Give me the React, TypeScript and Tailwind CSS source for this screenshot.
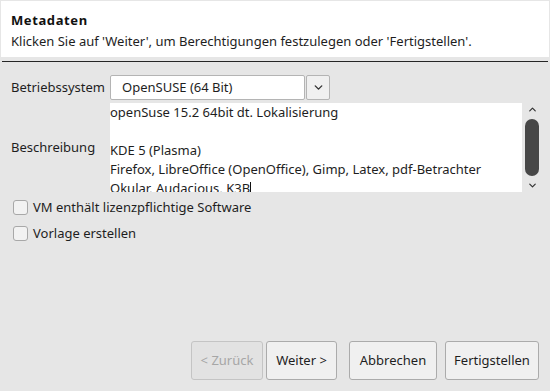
import { ChevronDown, ChevronUp } from 'lucide-react'

const font = { fontFamily: '"Noto Sans", "Open Sans", sans-serif' }

function Checkbox({ label }: { label: string }) {
  return (
    <label className="flex items-center gap-[5px] h-[15px]">
      <span className="w-[15px] h-[15px] rounded-[3px] border border-[#a8a8a8] bg-[#f2f2f2] shrink-0" />
      <span className="text-[13px] text-[#1e1e1e] leading-none">{label}</span>
    </label>
  )
}

function Button({ children, disabled, className = '' }: { children: React.ReactNode; disabled?: boolean; className?: string }) {
  return (
    <button
      disabled={disabled}
      className={`h-[39px] rounded-[3px] border text-[13px] ${
        disabled ? 'bg-[#e2e2e2] border-[#c4c4c4] text-[#a6a6a6]' : 'bg-[#f0f0f0] border-[#ababab] text-[#1e1e1e]'
      } ${className}`}
    >
      {children}
    </button>
  )
}

export default function App() {
  return (
    <div style={font} className="w-[550px] h-[391px] bg-[#e6e6e6] flex flex-col overflow-hidden">
      {/* Kopfbereich */}
      <div className="mx-[1px] mt-[1px] h-[56px] bg-white px-[10px] pt-[10px]">
        <div className="text-[13px] font-bold tracking-[0.6px] text-[#111] leading-[18px]">Metadaten</div>
        <div className="text-[13px] text-[#1e1e1e] leading-[18px] mt-[3px]">
          Klicken Sie auf 'Weiter', um Berechtigungen festzulegen oder 'Fertigstellen'.
        </div>
      </div>
      <div className="mx-[2px] mt-[4px] h-[1px] bg-[#262626]" />

      <div className="flex-1 flex flex-col pl-[11px] pt-[13px]">
        <div className="flex items-center h-[25px]">
          <span className="w-[99px] text-[13px] text-[#1e1e1e]">Betriebssystem</span>
          <div className="w-[195px] h-[25px] bg-white border border-[#b4b4b4] rounded-[2px] flex items-center pl-[11px] text-[13px] text-[#1e1e1e]">
            OpenSUSE (64 Bit)
          </div>
          <div className="ml-[1px] w-[24px] h-[25px] bg-[#f0f0f0] border border-[#b4b4b4] rounded-[2px] flex items-center justify-center">
            <ChevronDown size={13} strokeWidth={2.6} className="text-[#333]" />
          </div>
        </div>

        <div className="flex items-center mt-[3px] h-[89px]">
          <span className="w-[99px] text-[13px] text-[#1e1e1e]">Beschreibung</span>
          <div className="w-[412px] h-[89px] bg-white overflow-hidden pt-[0px] text-[13px] leading-[19px] text-[#1e1e1e]">
            <div>openSuse 15.2 64bit dt. Lokalisierung</div>
            <div>&nbsp;</div>
            <div>KDE 5 (Plasma)</div>
            <div>Firefox, LibreOffice (OpenOffice), Gimp, Latex, pdf-Betrachter</div>
            <div>
              Okular, Audacious, K3B<span className="inline-block w-[1px] h-[15px] bg-[#111] align-middle" />
            </div>
          </div>
          <div className="w-[18px] h-[89px] flex flex-col items-center justify-between ml-[1px] py-[1px]">
            <ChevronUp size={11} strokeWidth={2.6} className="text-[#333]" />
            <div className="w-[14px] h-[57px] rounded-full bg-[#474747]" />
            <ChevronDown size={11} strokeWidth={2.6} className="text-[#333]" />
          </div>
        </div>

        <div className="flex flex-col gap-[11px] mt-[8px] pl-[2px]">
          <Checkbox label="VM enthält lizenzpflichtige Software" />
          <Checkbox label="Vorlage erstellen" />
        </div>

        <div className="flex-1" />
        <div className="flex items-center justify-end pr-[11px] pb-[11px]">
          <Button disabled className="w-[72px]">&lt; Zurück</Button>
          <Button className="w-[71px] ml-[3px]">Weiter &gt;</Button>
          <Button className="w-[88px] ml-[12px]">Abbrechen</Button>
          <Button className="w-[94px] ml-[8px]">Fertigstellen</Button>
        </div>
      </div>
    </div>
  )
}
